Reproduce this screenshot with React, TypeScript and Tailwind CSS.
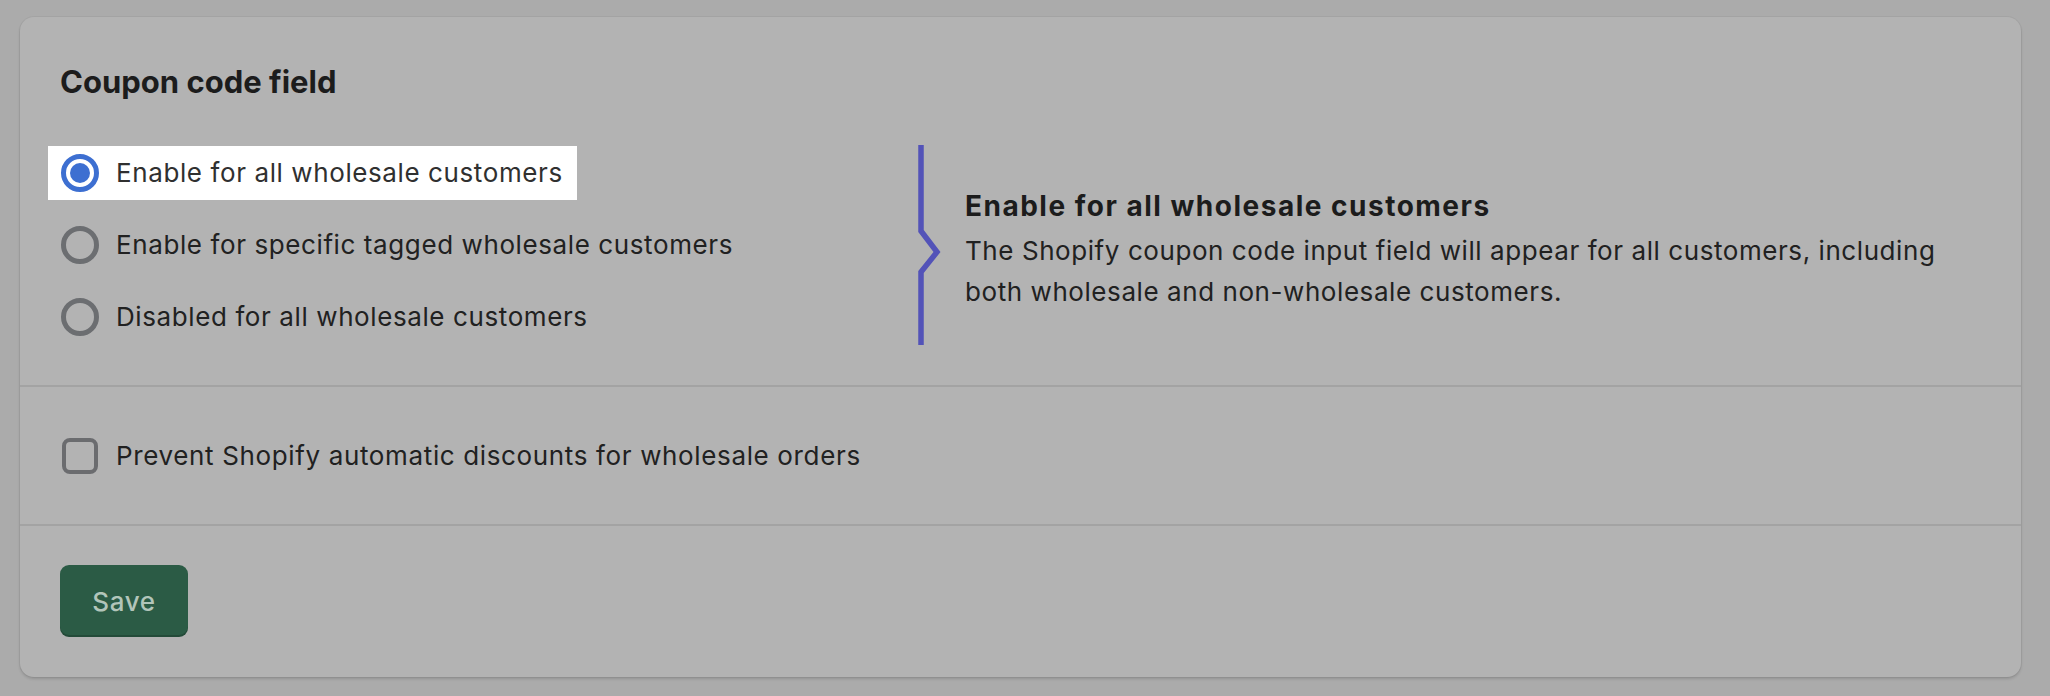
import React from "react";

function Radio({ checked }: { checked?: boolean }) {
  if (checked) {
    return (
      <span className="flex h-[38px] w-[38px] shrink-0 items-center justify-center rounded-full border-[5px] border-[#3d6fd1] bg-white">
        <span className="h-[20px] w-[20px] rounded-full bg-[#3d6fd1]" />
      </span>
    );
  }
  return <span className="block h-[38px] w-[38px] shrink-0 rounded-full border-[5px] border-[#6c6e71]" />;
}

export default function App() {
  const font = { fontFamily: "Inter, 'Noto Sans', sans-serif" };
  return (
    <div className="h-[696px] w-full bg-[#ababab] pl-[20px] pr-[29px] pt-[17px]" style={font}>
      <div className="h-[660px] w-[2001px] rounded-[14px] bg-[#b3b3b3] shadow-[0_0_0_1px_rgba(0,0,0,0.04),0_2px_3px_rgba(0,0,0,0.14)]">
        {/* Section 1 */}
        <div className="px-[40px] pb-[40px] pt-[45px]">
          <h2 className="text-[31px] font-bold leading-[40px] text-[#1c1c1c]">Coupon code field</h2>
          <div className="mt-[43px] flex h-[200px]">
            <div className="flex w-[858px] flex-col justify-center gap-[18px]">
              <div className="-ml-[12px] flex h-[54px] w-fit items-center gap-[17px] bg-white pl-[13px] pr-[14px]">
                <Radio checked />
                <span className="text-[26px] leading-[40px] tracking-[0.6px] text-[#303030]">Enable for all wholesale customers</span>
              </div>
              <div className="-ml-[12px] flex h-[54px] w-fit items-center gap-[17px] pl-[13px] pr-[14px]">
                <Radio />
                <span className="text-[26px] leading-[40px] tracking-[0.6px] text-[#212121]">Enable for specific tagged wholesale customers</span>
              </div>
              <div className="-ml-[12px] flex h-[54px] w-fit items-center gap-[17px] pl-[13px] pr-[14px]">
                <Radio />
                <span className="text-[26px] leading-[40px] tracking-[0.6px] text-[#212121]">Disabled for all wholesale customers</span>
              </div>
            </div>
            <div className="flex h-[200px] items-start">
              <svg width="24" height="200" viewBox="0 0 24 200" className="shrink-0">
                <polyline
                  points="3,0 3,86 19,107 3,127 3,200"
                  fill="none"
                  stroke="#5353b8"
                  strokeWidth="5.5"
                  strokeLinejoin="miter"
                />
              </svg>
              <div className="ml-[23px] mt-[41px] w-[1010px]">
                <div className="text-[28px] font-bold leading-[40px] tracking-[1.5px] text-[#1c1c1c]">Enable for all wholesale customers</div>
                <p className="mt-[4px] text-[26px] leading-[41px] tracking-[0.57px] text-[#212121]">
                  The Shopify coupon code input field will appear for all customers, including
                  <br />
                  both wholesale and non-wholesale customers.
                </p>
              </div>
            </div>
          </div>
        </div>
        <div className="h-[2px] bg-[#a3a3a3]" />
        {/* Section 2 */}
        <div className="flex h-[137px] items-center gap-[18px] pl-[42px]">
          <span className="block h-[36px] w-[36px] rounded-[8px] border-[4px] border-[#6b6c6f]" />
          <span className="text-[26px] leading-[40px] tracking-[0.64px] text-[#212121]">Prevent Shopify automatic discounts for wholesale orders</span>
        </div>
        <div className="h-[2px] bg-[#a3a3a3]" />
        {/* Section 3 */}
        <div className="px-[40px] pt-[39px]">
          <button className="flex h-[72px] w-[128px] items-center justify-center rounded-[9px] bg-[#2b5b45] text-[26px] font-medium tracking-[0.6px] text-[#b2c5ba] shadow-[inset_0_-2px_0_rgba(0,0,0,0.18)]">
            Save
          </button>
        </div>
      </div>
    </div>
  );
}
